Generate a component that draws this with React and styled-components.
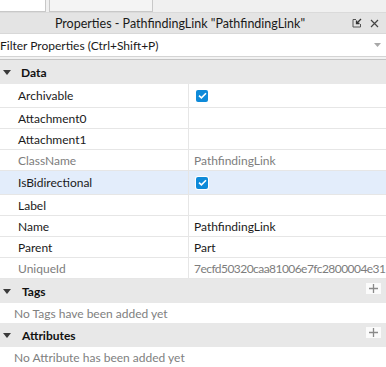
import React from "react"
import styled, { createGlobalStyle } from "styled-components"

const GlobalStyle = createGlobalStyle`
  html, body {
    margin: 0;
    padding: 0;
    background: #ffffff;
  }
  body {
    font-family: Lato, "Open Sans", sans-serif;
    width: 386px;
    height: 367px;
    overflow: hidden;
  }
`

const Panel = styled.div`
  width: 386px;
  height: 367px;
  display: flex;
  flex-direction: column;
  background: #ffffff;
  overflow: hidden;
`

const TabStrip = styled.div`
  height: 12px;
  display: flex;
  gap: 3px;
  background: #f0f0f0;
  border-bottom: 1px solid #dadada;
`

const Tab = styled.div`
  width: ${(p) => p.w}px;
  height: 11px;
  background: ${(p) => (p.active ? "#ffffff" : "#f4f4f4")};
  border: 1px solid #c8c8c8;
  border-top: none;
  border-left: ${(p) => (p.active ? "none" : "1px solid #c8c8c8")};
`

const TitleBar = styled.div`
  height: 20px;
  display: flex;
  align-items: center;
  justify-content: center;
  position: relative;
  background: #e4e4e4;
  font-size: 12.5px;
  color: #1a1a1a;
  padding-right: 26px;
`

const TitleIcons = styled.div`
  position: absolute;
  right: 7px;
  top: 5px;
  display: flex;
  gap: 8px;
  align-items: center;
`

const FilterBar = styled.div`
  height: 22px;
  display: flex;
  align-items: center;
  justify-content: space-between;
  padding: 0 5px 0 0;
  background: #ffffff;
  border-top: 1px solid #d8d8d8;
  border-bottom: 1px solid #d4d4d4;
  font-size: 12px;
  color: #1a1a1a;
`

const Spacer = styled.div`
  height: 2px;
  background: #f2f2f2;
  border-bottom: 1px solid #c4c4c4;
`

const Header = styled.div`
  height: 24px;
  flex-shrink: 0;
  display: flex;
  align-items: center;
  background: #e8e8e8;
  font-size: 12px;
  font-weight: 700;
  color: #111;
  position: relative;
`

const Arrow = styled.span`
  width: 0;
  height: 0;
  margin: 0 10px 0 3px;
  border-left: 4px solid transparent;
  border-right: 4px solid transparent;
  border-top: 5px solid #3a3a3a;
`

const HeaderLabel = styled.span`
  margin-left: ${(p) => p.indent || 0}px;
`

const AddButton = styled.div`
  position: absolute;
  right: 5px;
  top: 4px;
  width: 15px;
  height: 11px;
  background: #fbfbfb;
  display: flex;
  align-items: center;
  justify-content: center;
`

const Row = styled.div`
  height: ${(p) => (p.tall ? 23 : 20)}px;
  flex-shrink: 0;
  display: grid;
  grid-template-columns: 189px 1fr;
  border-bottom: 1px solid #e6e6e6;
  background: ${(p) => (p.selected ? "#e3edfb" : "#ffffff")};
  font-size: 12px;
  color: ${(p) => (p.readonly ? "#7d7d7d" : "#1a1a1a")};
`

const NameCell = styled.div`
  display: flex;
  align-items: center;
  padding-left: 18px;
  border-right: 1px solid #e6e6e6;
  white-space: nowrap;
`

const ValueCell = styled.div`
  display: flex;
  align-items: center;
  padding-left: 5px;
  white-space: nowrap;
  overflow: hidden;
  letter-spacing: ${(p) => (p.tight ? "-0.55px" : "normal")};
`

const Checkbox = styled.div`
  width: 12px;
  height: 12px;
  margin-left: 2px;
  border-radius: 2px;
  background: #0e8ad9;
  display: flex;
  align-items: center;
  justify-content: center;
  box-shadow: 0 0 0 1px #ffffff;
`

const Empty = styled.div`
  height: 20px;
  flex-shrink: 0;
  display: flex;
  align-items: center;
  padding-left: 14px;
  font-size: 12px;
  color: #808080;
  background: #ffffff;
`

function Check() {
  return (
    <svg width="9" height="7" viewBox="0 0 9 7">
      <path d="M1 3.6 L3.4 5.8 L8 1.2" fill="none" stroke="#fff" strokeWidth="1.6" />
    </svg>
  )
}

function Plus() {
  return (
    <svg width="9" height="9" viewBox="0 0 9 9">
      <path d="M4.5 0 V9 M0 4.5 H9" stroke="#8a8a8a" strokeWidth="1.3" />
    </svg>
  )
}

const props = [
  { name: "Archivable", check: true, tall: true },
  { name: "Attachment0" },
  { name: "Attachment1" },
  { name: "ClassName", value: "PathfindingLink", readonly: true },
  { name: "IsBidirectional", check: true, tall: true, selected: true },
  { name: "Label" },
  { name: "Name", value: "PathfindingLink" },
  { name: "Parent", value: "Part" },
  { name: "UniqueId", value: "7ecfd50320caa81006e7fc2800004e31", readonly: true, tight: true },
]

export default function App() {
  return (
    <Panel>
      <GlobalStyle />
      <TabStrip>
        <Tab w={45} active />
        <Tab w={102} />
      </TabStrip>
      <TitleBar>
        Properties - PathfindingLink "PathfindingLink"
        <TitleIcons>
          <svg width="10" height="10" viewBox="0 0 10 10">
            <path d="M4 1.5 H1 V9 H8.5 V6" fill="none" stroke="#555" strokeWidth="1" />
            <path d="M9 1 L4.5 5.5 M4.5 2.5 V5.5 H7.5" fill="none" stroke="#333" strokeWidth="1.3" />
          </svg>
          <svg width="9" height="9" viewBox="0 0 9 9">
            <path d="M1 1 L8 8 M8 1 L1 8" stroke="#444" strokeWidth="1.2" />
          </svg>
        </TitleIcons>
      </TitleBar>
      <FilterBar>
        <span>Filter Properties (Ctrl+Shift+P)</span>
        <svg width="7" height="4" viewBox="0 0 7 4">
          <path d="M0 0 H7 L3.5 4 Z" fill="#a8a8a8" />
        </svg>
      </FilterBar>
      <Spacer />
      <Header>
        <Arrow />
        <HeaderLabel>Data</HeaderLabel>
      </Header>
      {props.map((p) => (
        <Row key={p.name} tall={p.tall} selected={p.selected} readonly={p.readonly}>
          <NameCell>{p.name}</NameCell>
          <ValueCell tight={p.tight}>
            {p.check ? (
              <Checkbox>
                <Check />
              </Checkbox>
            ) : (
              p.value
            )}
          </ValueCell>
        </Row>
      ))}
      <Header>
        <Arrow />
        <HeaderLabel indent={1}>Tags</HeaderLabel>
        <AddButton>
          <Plus />
        </AddButton>
      </Header>
      <Empty>No Tags have been added yet</Empty>
      <Header>
        <Arrow />
        <HeaderLabel indent={1}>Attributes</HeaderLabel>
        <AddButton>
          <Plus />
        </AddButton>
      </Header>
      <Empty>No Attribute has been added yet</Empty>
    </Panel>
  )
}
